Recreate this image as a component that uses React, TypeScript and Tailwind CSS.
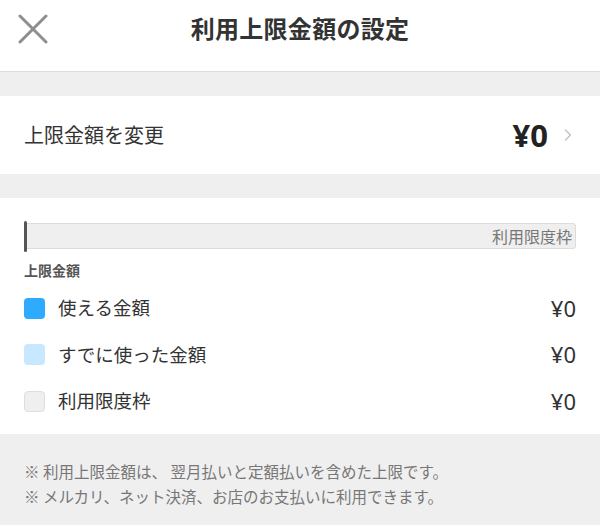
import { ChevronRight } from "lucide-react";

const LEGEND = [
  { label: "使える金額", amount: "¥0", swatch: "bg-[#2eabff]" },
  { label: "すでに使った金額", amount: "¥0", swatch: "bg-[#c8e8ff]" },
  { label: "利用限度枠", amount: "¥0", swatch: "bg-[#efefef] border border-[#dedede]" },
];

const LATIN = { fontFamily: '"Noto Sans", "Liberation Sans", sans-serif' };

export default function App() {
  return (
    <div
      className="flex h-[525px] w-[600px] flex-col overflow-hidden bg-[#efefef] text-[#333]"
      style={{ fontFamily: '"Noto Sans CJK JP", "Noto Sans", sans-serif' }}
    >
      <header className="relative flex h-[72px] shrink-0 items-center justify-center border-b border-[#dddddd] bg-white">
        <button className="absolute left-[18px] top-[14px] text-[#8e8e8e]">
          <svg width="30" height="30" viewBox="0 0 30 30" fill="none" stroke="currentColor" strokeWidth="3" strokeLinecap="round">
            <path d="M2 2 L28 28 M28 2 L2 28" />
          </svg>
        </button>
        <h1 className="-mt-[16px] text-[24px] font-bold tracking-[0.3px] text-[#333]">利用上限金額の設定</h1>
      </header>

      <div className="h-[24px] shrink-0" />

      <div className="flex h-[78px] shrink-0 items-center bg-white pl-[24px] pr-[22px]">
        <span className="text-[20px] text-[#333]">上限金額を変更</span>
        <span className="ml-auto text-[31px] font-bold leading-none text-[#222]" style={LATIN}>
          ¥0
        </span>
        <ChevronRight size={20} strokeWidth={1.75} className="ml-[10px] text-[#c4c4c4]" />
      </div>

      <div className="h-[24px] shrink-0" />

      <section className="flex h-[236px] shrink-0 flex-col bg-white px-[24px] pt-[25px]">
        <div className="relative h-[26px] rounded-[3px] border border-[#dcdcdc] bg-[#efefef]">
          <div className="absolute -left-px -top-[3px] h-[31px] w-[3px] rounded-full bg-[#555]" />
          <span className="absolute right-[3px] top-[1px] text-[16px] leading-[22px] text-[#777]">利用限度枠</span>
        </div>
        <p className="mt-[11px] text-[14px] font-bold text-[#555]">上限金額</p>
        <ul className="mt-[4px] flex flex-col">
          {LEGEND.map((item) => (
            <li key={item.label} className="flex h-[46.5px] items-center">
              <span className={`h-[21px] w-[21px] shrink-0 rounded-[4px] ${item.swatch}`} />
              <span className="ml-[13px] text-[18.5px] text-[#333]">{item.label}</span>
              <span className="ml-auto text-[22px] text-[#333]" style={LATIN}>
                {item.amount}
              </span>
            </li>
          ))}
        </ul>
      </section>

      <footer className="flex flex-col px-[24px] pt-[25px] text-[15.5px] leading-[25px] text-[#777]">
        <p>※ 利用上限金額は、 翌月払いと定額払いを含めた上限です。</p>
        <p>※ メルカリ、ネット決済、お店のお支払いに利用できます。</p>
      </footer>
    </div>
  );
}
